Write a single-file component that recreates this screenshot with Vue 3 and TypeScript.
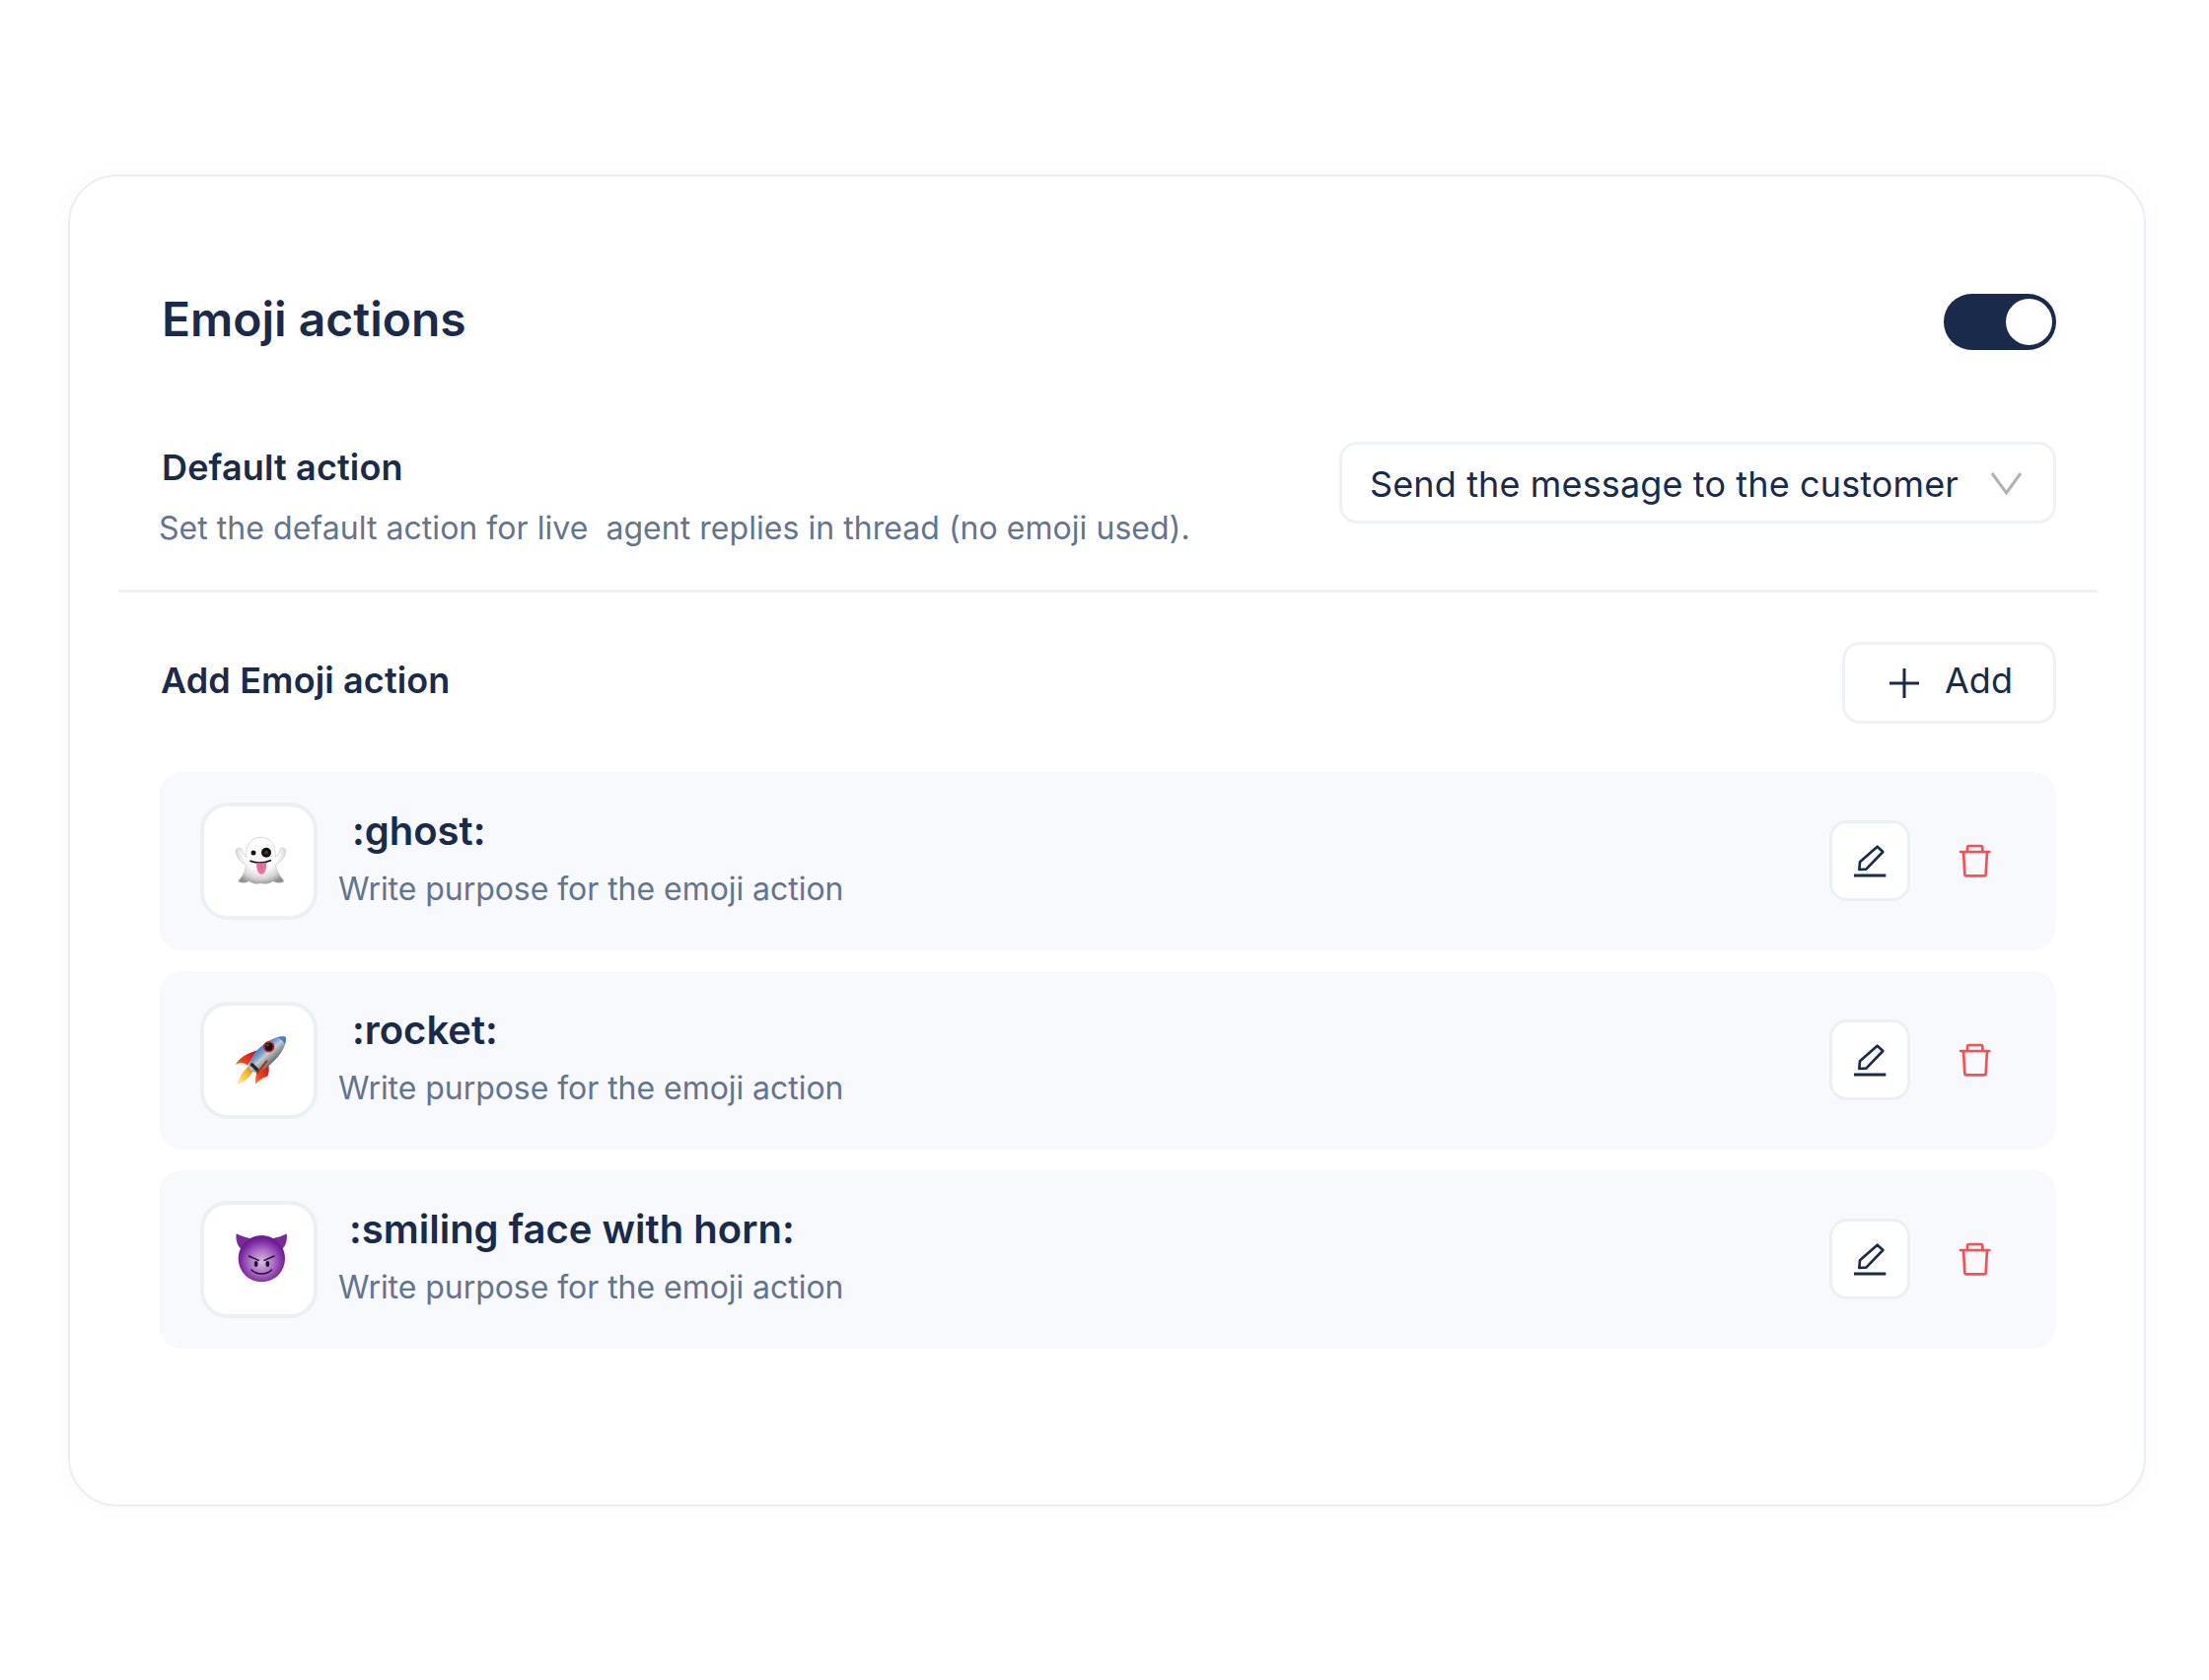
<script setup lang="ts">
type EmojiAction = { id: string; name: string; indent: number }

const actions: EmojiAction[] = [
  { id: 'ghost', name: ':ghost:', indent: 14 },
  { id: 'rocket', name: ':rocket:', indent: 14 },
  { id: 'devil', name: ':smiling face with horn:', indent: 11 },
]
</script>

<template>
  <main class="page">
    <section class="card">
      <header class="head">
        <h1>Emoji actions</h1>
        <div class="toggle"><span class="knob"></span></div>
      </header>

      <div class="default-row">
        <div class="default-copy">
          <h2>Default action</h2>
          <p>Set the default action for live&nbsp; agent replies in thread (no emoji used).</p>
        </div>
        <div class="select">
          <span>Send the message to the customer</span>
          <svg width="33" height="24" viewBox="0 0 33 24" fill="none" stroke="#b0b2b4" stroke-width="3">
            <path d="M2 2l14.500 20L31 2" />
          </svg>
        </div>
      </div>

      <div class="divider"></div>

      <div class="add-row">
        <h3>Add Emoji action</h3>
        <button class="add-btn" type="button">
          <svg width="32" height="32" viewBox="0 0 32 32" fill="none" stroke="#1a2a4a" stroke-width="3">
            <path d="M16 1v30M1 16h30" />
          </svg>
          <span>Add</span>
        </button>
      </div>

      <ul class="list">
        <li v-for="a in actions" :key="a.id" class="item">
          <div class="emoji-box">
            <svg v-if="a.id === 'ghost'" width="55" height="55" viewBox="80 48 165 165">
              <defs>
                <radialGradient id="gh" gradientUnits="userSpaceOnUse" cx="162" cy="105" r="100">
                  <stop offset="0.5" stop-color="#ffffff" />
                  <stop offset="0.78" stop-color="#d6d6d6" />
                  <stop offset="1" stop-color="#8e8e8e" />
                </radialGradient>
              </defs>
              <path fill="url(#gh)" stroke="#b4b4b4" stroke-width="1.500" d="M162 58C136 58 120 76 118 106L117 118C110 112 107 100 104 93C100 88 90 89 87 97C84 112 98 132 118 142C116 160 106 178 94 191C102 197 116 197 127 191C137 199 150 201 162 197C174 201 190 199 199 191C210 197 226 197 233 191C220 176 210 160 207 142C226 132 240 112 238 97C235 89 226 88 222 93C219 100 216 112 208 118L206 104C204 76 188 58 162 58Z" />
              <circle cx="140" cy="105" r="7.500" fill="#141414" />
              <circle cx="179" cy="104" r="15" fill="#111" />
              <circle cx="179" cy="104" r="6" fill="#3a3a3a" />
              <path d="M131 130C148 137 172 137 192 128" fill="none" stroke="#141414" stroke-width="5" stroke-linecap="round" />
              <path fill="#ee6f9f" d="M149 135C158 137 170 137 180 134C180 148 178 170 164 170C152 170 149 150 149 135Z" />
              <path d="M164 140V156" stroke="#c94a7e" stroke-width="2" />
            </svg>
            <svg v-else-if="a.id === 'rocket'" width="55" height="55" viewBox="80 54 165 165">
              <defs>
                <linearGradient id="rb" gradientUnits="userSpaceOnUse" x1="150" y1="85" x2="205" y2="145">
                  <stop offset="0.1" stop-color="#2f6fc4" />
                  <stop offset="0.42" stop-color="#7ea6cf" />
                  <stop offset="0.55" stop-color="#c8cccc" />
                  <stop offset="1" stop-color="#4e5a60" />
                </linearGradient>
                <linearGradient id="rf" x1="1" y1="0" x2="0" y2="1">
                  <stop offset="0.2" stop-color="#d8180f" />
                  <stop offset="0.7" stop-color="#f0421a" />
                  <stop offset="1" stop-color="#fb9a16" />
                </linearGradient>
                <linearGradient id="rl" x1="1" y1="0" x2="0" y2="1">
                  <stop offset="0" stop-color="#e9531c" />
                  <stop offset="0.45" stop-color="#fbb81f" />
                  <stop offset="1" stop-color="#fff0a0" />
                </linearGradient>
              </defs>
              <path fill="url(#rf)" d="M85 150C96 130 118 116 152 106L122 152C112 142 98 143 85 150Z" />
              <path fill="url(#rf)" d="M146 209C143 190 150 160 182 133C190 158 188 178 182 186C170 188 158 196 146 209Z" />
              <path fill="url(#rl)" d="M92 211C94 190 108 165 136 146L144 160C136 180 116 200 92 211Z" />
              <path fill="url(#rb)" d="M238 65C242 92 222 126 178 160C164 170 148 178 136 170L126 158C124 146 134 128 146 112C174 78 210 60 238 65Z" />
              <path fill="#3f7fd0" d="M238 65C232 63 222 63 212 66C222 70 232 78 236 88C239 80 240 72 238 65Z" />
              <path d="M136 150L151 165" stroke="#2b2b2b" stroke-width="11" stroke-linecap="round" />
              <path d="M150 177L182 137" stroke="#c0201a" stroke-width="6" />
              <circle cx="187" cy="95" r="17" fill="#d4201a" />
              <circle cx="187" cy="95" r="12" fill="#141414" />
              <circle cx="183" cy="90" r="4" fill="#4a4a4a" />
            </svg>
            <svg v-else width="55" height="55" viewBox="80 60 165 165">
              <defs>
                <radialGradient id="dv" gradientUnits="userSpaceOnUse" cx="165" cy="150" r="72">
                  <stop offset="0" stop-color="#d6bde1" />
                  <stop offset="0.5" stop-color="#ab72c3" />
                  <stop offset="0.85" stop-color="#8430a8" />
                  <stop offset="1" stop-color="#6f1d96" />
                </radialGradient>
              </defs>
              <path fill="#7a2b99" d="M88 64C102 72 122 76 134 80L106 114C92 104 85 84 88 64Z" />
              <path fill="#7a2b99" d="M241 64C228 72 208 76 196 80L224 114C238 104 244 84 241 64Z" />
              <circle cx="165" cy="140" r="71" fill="url(#dv)" />
              <ellipse cx="148" cy="156" rx="5.500" ry="9" fill="#251033" />
              <ellipse cx="183" cy="156" rx="5.500" ry="9" fill="#251033" />
              <path d="M126 132L156 145M203 132L173 145M134 174C150 190 180 190 195 174" fill="none" stroke="#251033" stroke-width="4.500" stroke-linecap="round" />
            </svg>
          </div>
          <div class="item-copy">
            <h4 :style="{ marginLeft: a.indent + 'px' }">{{ a.name }}</h4>
            <p>Write purpose for the emoji action</p>
          </div>
          <button class="edit-btn" type="button" aria-label="Edit">
            <svg width="40" height="40" viewBox="107 99 120 120" fill="none" stroke="#1a2a4a">
              <path stroke-width="8" stroke-linejoin="round" d="M135 186L137 163L190 116L207 132L156 185Z" />
              <path stroke-width="9" d="M119 204H216" />
            </svg>
          </button>
          <button class="del-btn" type="button" aria-label="Delete">
            <svg width="40" height="40" viewBox="430 100 120 120" fill="none" stroke="#ff4d4f" stroke-width="8" stroke-linejoin="round">
              <path stroke-linecap="round" d="M445 133H533" />
              <path d="M466 133V120Q466 115 471 115H507Q512 115 512 120V133" />
              <path d="M454 133L458 201Q458 206 464 206H516Q522 206 522 201L526 133" />
            </svg>
          </button>
        </li>
      </ul>
    </section>
  </main>
</template>

<style>
body { margin: 0; background: #fff; }
</style>

<style scoped>
.page {
  width: 2240px;
  height: 1704px;
  box-sizing: border-box;
  padding: 177px 0 0 69px;
  font-family: Inter, "Liberation Sans", sans-serif;
  color: #1a2a4a;
}
.card {
  box-sizing: border-box;
  width: 2107px;
  height: 1351px;
  padding: 119px 47px 0 49px;
  background: #fff;
  border: 2px solid #e8eef4;
  border-radius: 50px;
  box-shadow: 0 0 24px rgba(26, 42, 74, 0.03);
}
h1, h2, h3, h4, p { margin: 0; }
.head {
  display: flex;
  align-items: center;
  justify-content: space-between;
  padding: 0 42px 0 44px;
}
.head h1 { font-size: 48px; font-weight: 600; line-height: 51px; margin-bottom: 6px; }
.toggle {
  display: flex;
  justify-content: flex-end;
  align-items: center;
  width: 114px;
  height: 57px;
  box-sizing: border-box;
  padding-right: 4px;
  border-radius: 29px;
  background: #1a2a4a;
}
.knob { width: 47px; height: 47px; border-radius: 50%; background: #fff; }
.default-row {
  display: flex;
  justify-content: space-between;
  align-items: flex-start;
  margin-top: 93px;
  padding: 0 42px 0 41px;
}
.default-copy h2 { margin: 6px 0 0 3px; font-size: 36px; font-weight: 600; line-height: 40px; letter-spacing: 0.13px; }
.default-copy p { margin-top: 21px; font-size: 32px; line-height: 41px; letter-spacing: 0.04px; color: #64748f; }
.select {
  display: flex;
  align-items: center;
  justify-content: space-between;
  box-sizing: border-box;
  width: 727px;
  height: 83px;
  padding: 0 31px 0 28px;
  border: 3px solid #eef1f5;
  border-radius: 18px;
  font-size: 36px;
  letter-spacing: 0.13px;
}
.select span { padding-top: 2px; }
.divider { height: 3px; margin-top: 42px; background: #eef1f5; }
.add-row {
  display: flex;
  align-items: center;
  justify-content: space-between;
  margin-top: 50px;
  padding: 0 42px 0 43px;
}
.add-row h3 { font-size: 36px; font-weight: 600; letter-spacing: 0.13px; margin-bottom: 5px; }
.add-btn {
  display: flex;
  align-items: center;
  gap: 25px;
  box-sizing: border-box;
  width: 217px;
  height: 83px;
  padding: 0 0 0 44px;
  background: #fff;
  border: 3px solid #eef1f5;
  border-radius: 18px;
  font: inherit;
  font-size: 36px;
  color: inherit;
}
.add-btn span { margin-bottom: 6px; }
.list {
  display: flex;
  flex-direction: column;
  gap: 21px;
  margin: 49px 42px 0 41px;
  padding: 0;
  list-style: none;
}
.item {
  display: flex;
  align-items: center;
  height: 181px;
  padding: 0 62px 0 42px;
  border-radius: 24px;
  background: #f7f9fc;
}
.emoji-box {
  display: flex;
  align-items: center;
  justify-content: center;
  box-sizing: border-box;
  flex: none;
  width: 119px;
  height: 119px;
  padding-left: 3px;
  background: #fff;
  border: 4px solid #ebf0f3;
  border-radius: 28px;
}
.item-copy { flex: 1; margin-left: 21px; padding-bottom: 6px; }
.item-copy h4 { font-size: 40px; font-weight: 600; line-height: 48px; margin-bottom: 14px; }
.item-copy p { font-size: 32px; line-height: 42px; letter-spacing: -0.05px; color: #64748f; }
.edit-btn {
  display: flex;
  align-items: center;
  justify-content: center;
  box-sizing: border-box;
  width: 82px;
  height: 82px;
  margin-bottom: 2px;
  padding: 0;
  background: #fff;
  border: 3px solid #ebf0f3;
  border-radius: 18px;
}
.del-btn {
  display: flex;
  margin: 0 0 2px 46px;
  padding: 0;
  background: none;
  border: 0;
}
</style>
